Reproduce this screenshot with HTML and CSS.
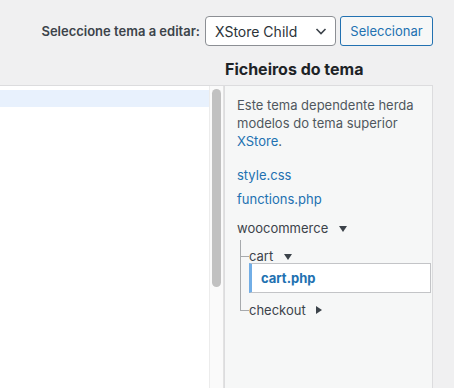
FILE: index.html
```html
<!DOCTYPE html>
<html lang="pt">
  <head>
    <meta charset="UTF-8" />
    <meta name="viewport" content="width=device-width, initial-scale=1.0" />
    <title>Editor de temas</title>
    <link rel="stylesheet" href="styles.css">
  </head>
  <body>
    <div class="toolbar">
      <label class="toolbar-label" for="theme">Seleccione tema a editar:</label>
      <div class="select" id="theme">
        <span>XStore Child</span>
        <svg width="12" height="8" viewBox="0 0 12 8"><path d="M1.5 2l4.5 4.5 4.5-4.5" fill="none" stroke="#3c434a" stroke-width="1.6"/></svg>
      </div>
      <button class="button">Seleccionar</button>
    </div>

    <div class="layout">
      <h2 class="side-title">Ficheiros do tema</h2>

      <div class="editor">
        <div class="code">
          <div class="code-line active"></div>
        </div>
        <div class="scrollbar">
          <div class="thumb"></div>
        </div>
      </div>

      <div class="templateside">
        <p class="intro">
          Este tema dependente herda modelos do tema superior
          <a href="#">XStore</a>.
        </p>
        <ul class="files">
          <li><a href="#">style.css</a></li>
          <li><a href="#">functions.php</a></li>
          <li class="folder">
            <span class="folder-name">woocommerce
              <svg class="caret" width="8" height="6" viewBox="0 0 8 6"><path d="M0 0h8L4 6z" fill="#3c434a"/></svg>
            </span>
            <ul class="tree">
              <li>
                <span class="folder-name sub">cart
                  <svg class="caret" width="8" height="6" viewBox="0 0 8 6"><path d="M0 0h8L4 6z" fill="#3c434a"/></svg>
                </span>
                <a href="#" class="current">cart.php</a>
              </li>
              <li class="last">
                <span class="folder-name">checkout
                  <svg class="caret" width="6" height="8" viewBox="0 0 6 8"><path d="M0 0v8l6-4z" fill="#3c434a"/></svg>
                </span>
              </li>
            </ul>
          </li>
        </ul>
      </div>
    </div>
  </body>
</html>
```

FILE: styles.css
```css
html,
body {
  height: 100%;
}
body {
  margin: 0;
  overflow: hidden;
  display: flex;
  flex-direction: column;
  background-color: #f0f0f1;
  color: #3c434a;
  font-family: Inter, "Liberation Sans", sans-serif;
  font-size: 13px;
}
a {
  color: #2271b1;
  text-decoration: none;
}
.toolbar {
  display: flex;
  justify-content: flex-end;
  align-items: center;
  padding: 16px 21px 0 0;
}
.toolbar-label {
  font-weight: 600;
  margin-right: 5px;
}
.select {
  box-sizing: border-box;
  width: 131px;
  height: 30px;
  display: flex;
  align-items: center;
  justify-content: space-between;
  padding: 0 8px 0 9px;
  background: white;
  border: 1px solid #8c8f94;
  border-radius: 4px;
  color: #2c3338;
  font-size: 14px;
}
.button {
  box-sizing: border-box;
  height: 30px;
  width: 93px;
  margin-left: 4px;
  padding: 0;
  background: #f6f7f7;
  border: 1px solid #2271b1;
  border-radius: 3px;
  color: #2271b1;
  font-family: inherit;
  font-size: 13px;
}
.layout {
  flex: 1;
  display: grid;
  grid-template-columns: 224px 209px;
  grid-template-rows: auto 1fr;
  min-height: 0;
}
.side-title {
  grid-column: 2;
  grid-row: 1;
  margin: 13px 0 6px 1px;
  font-size: 16px;
  line-height: 20px;
  font-weight: 700;
  color: #1d2327;
}
.editor {
  grid-column: 1;
  grid-row: 2;
  display: flex;
  border-top: 1px solid #dcdcde;
  background: white;
}
.code {
  flex: 1;
  padding-top: 4px;
}
.code-line {
  height: 17px;
}
.code-line.active {
  background-color: #e8f1fd;
}
.scrollbar {
  width: 13px;
  background: #fafafa;
  border-left: 1px solid #ececec;
  border-right: 1px solid #e2e2e2;
}
.thumb {
  width: 9px;
  height: 198px;
  margin: 3px 0 0 2px;
  border-radius: 5px;
  background: #c1c1c1;
}
.templateside {
  grid-column: 2;
  grid-row: 2;
  padding: 10px 12px;
  background: #f6f7f7;
  border: 1px solid #dcdcde;
  border-bottom: none;
}
.intro {
  margin: 0 0 13px;
  line-height: 18px;
  color: #50575e;
}
.files,
.tree {
  list-style: none;
  margin: 0;
  padding: 0;
}
.files li a,
.folder-name {
  display: block;
  padding: 3px 0;
  line-height: 18px;
}
.folder {
  margin-top: 5px;
}
.caret {
  margin-left: 7px;
  vertical-align: 1px;
}
.tree {
  margin-top: 4px;
  padding-left: 12px;
}
.tree > li {
  position: relative;
}
.tree > li::before {
  content: "";
  position: absolute;
  left: -9px;
  top: -4px;
  width: 8px;
  height: 16px;
  border-left: 1px solid #a7aaad;
  border-bottom: 1px solid #a7aaad;
}
.tree > li:not(.last)::after {
  content: "";
  position: absolute;
  left: -9px;
  top: 0;
  bottom: 0;
  border-left: 1px solid #a7aaad;
}
.tree > li.last {
  margin-top: 5px;
}
.tree > li.last::before {
  top: -5px;
  height: 17px;
}
.folder-name.sub {
  padding: 5px 0 0;
  line-height: 15px;
}
.files li a.current {
  margin: -1px -11px 0 0;
  padding: 5px 0 5px 9px;
  background: white;
  border: 1px solid #c3c4c7;
  border-left: 3px solid #72aee6;
  font-weight: 700;
}
```
